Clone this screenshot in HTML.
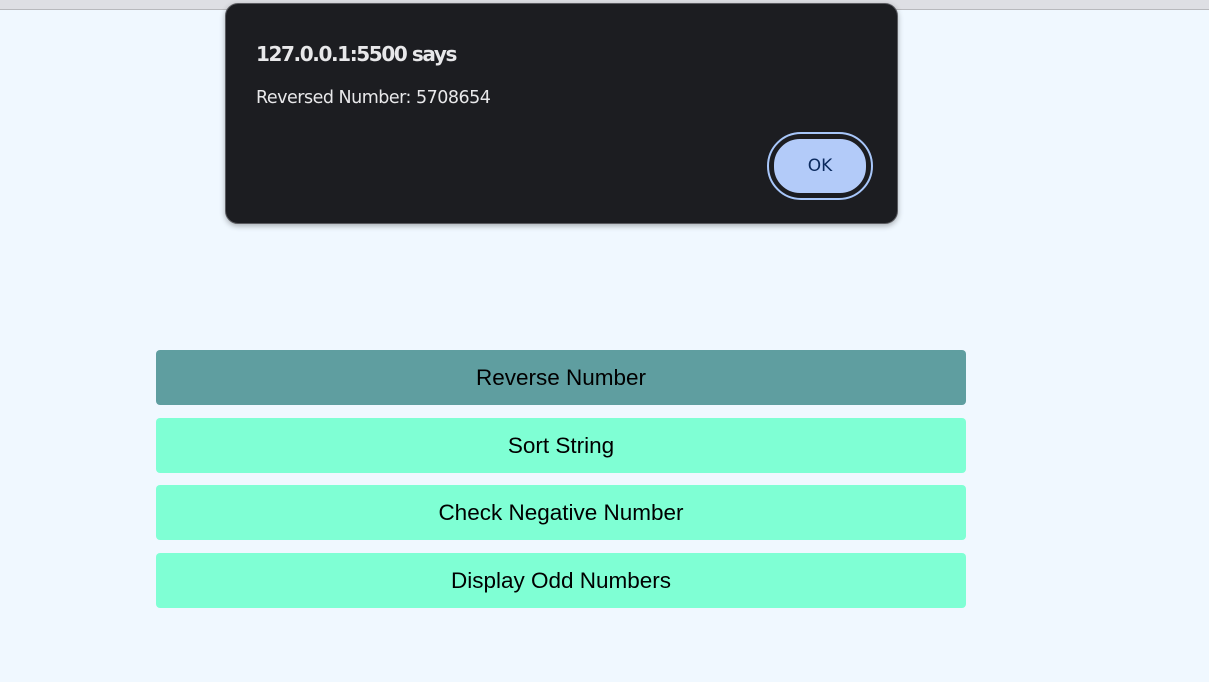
<!DOCTYPE html>
<html><head><style>
body{margin:0;width:1209px;height:682px;background:#f0f8ff;position:relative;overflow:hidden;font-family:"Liberation Sans",Arial,sans-serif}
.top{position:absolute;left:0;top:0;width:1209px;height:9px;background:#dedfe4;border-bottom:1px solid #b8b9bd}
.btn{position:absolute;left:156px;width:810px;height:55px;border-radius:4px;background:#7fffd4;color:#000;font-size:22.5px;text-align:center;line-height:55px}
.dlg{position:absolute;left:225px;top:3px;width:671px;height:219px;background:#1c1d21;border:1px solid #5a5b60;border-radius:13px;box-shadow:0 2px 6px rgba(0,0,0,.3);color:#e8e8ea;font-family:"DejaVu Sans","Liberation Sans",sans-serif}
.t{position:absolute;left:30px;top:38px;font-size:20px;font-weight:bold;letter-spacing:-1.4px}
.m{position:absolute;left:30px;top:84px;font-size:17.5px;letter-spacing:-0.5px}
.ok{position:absolute;left:541px;top:128px;width:102px;height:64px;border-radius:34px;border:2px solid #a8c7fa;}
.ok div{position:absolute;left:3px;top:3px;width:92px;height:54px;border-radius:28px;border:2px solid #1c1d21;background:#b3cbf9;color:#0b2a5e;font-size:17px;text-align:center;line-height:54px}
</style></head><body>
<div class="top"></div>
<div class="btn" style="top:350px;background:#5f9ea0">Reverse Number</div>
<div class="btn" style="top:418px">Sort String</div>
<div class="btn" style="top:485px">Check Negative Number</div>
<div class="btn" style="top:553px">Display Odd Numbers</div>
<div class="dlg">
<div class="t">127.0.0.1:5500 says</div>
<div class="m">Reversed Number: 5708654</div>
<div class="ok"><div>OK</div></div>
</div>
</body></html>
